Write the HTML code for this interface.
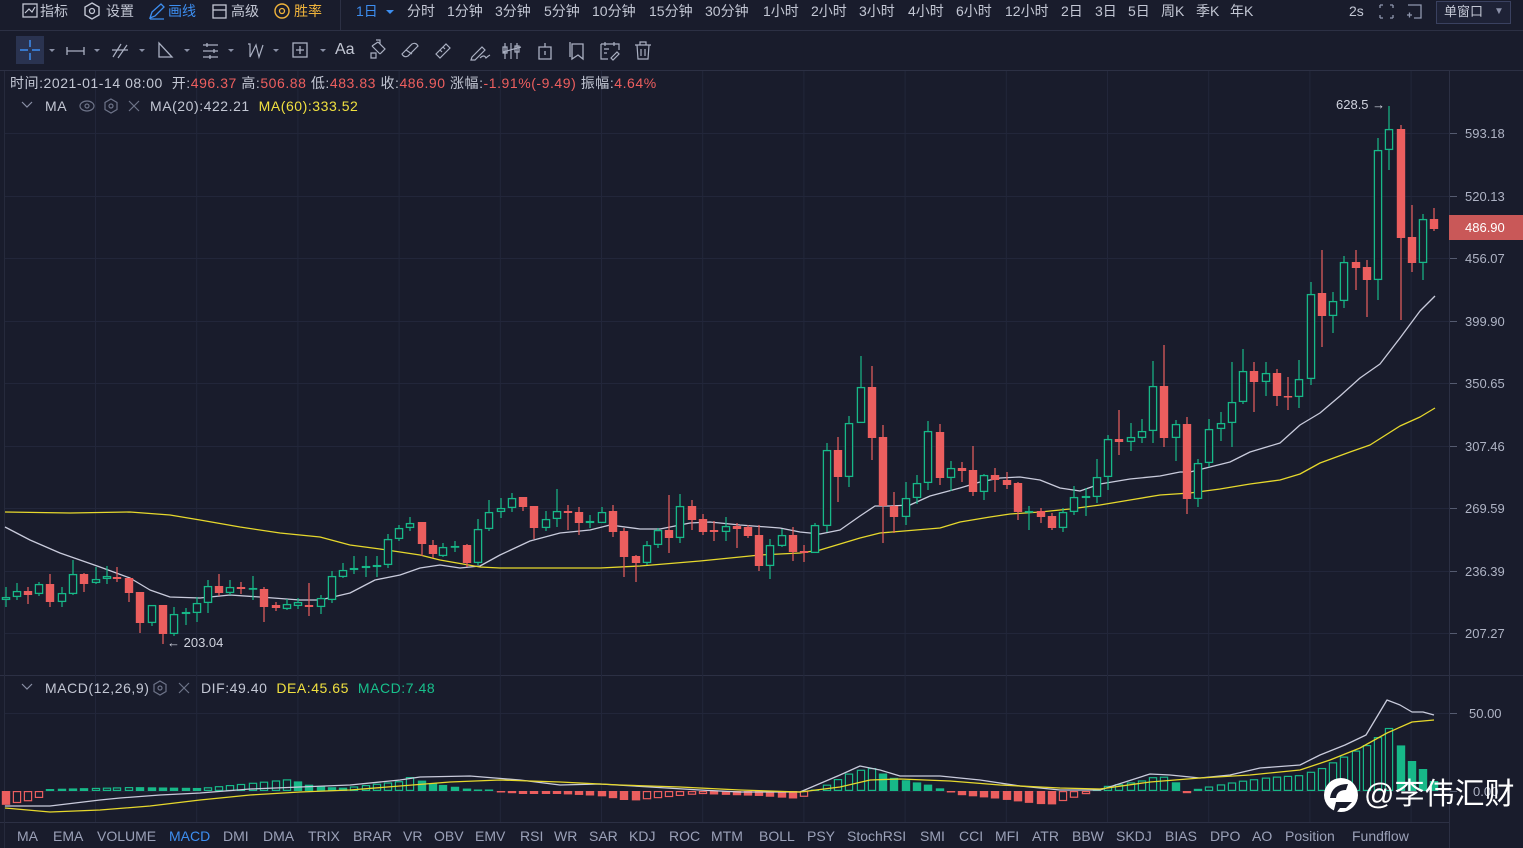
<!DOCTYPE html>
<html><head><meta charset="utf-8">
<style>
*{margin:0;padding:0;box-sizing:border-box}
body{width:1523px;height:848px;background:#191c2c;overflow:hidden;position:relative;font-family:"Liberation Sans","Noto Sans CJK SC",sans-serif;color:#c3c7d4}
.t{position:absolute;white-space:nowrap;font-size:14px;line-height:16px}
.ls{letter-spacing:0.55px}
.r{color:#ee5f5f}.y{color:#f0e040}.g{color:#18c08c}.b{color:#3d8ef0}
svg{position:absolute;left:0;top:0}
</style></head><body>
<div style="position:absolute;left:16px;top:36px;width:28px;height:28px;background:#2a3350"></div>
<svg id="s" width="1523" height="848"></svg>

<!-- top bar -->
<div class="t" style="left:40px;top:3px">指标</div>
<div class="t" style="left:106px;top:3px">设置</div>
<div class="t b" style="left:168px;top:3px">画线</div>
<div class="t" style="left:231px;top:3px">高级</div>
<div class="t" style="left:294px;top:3px;color:#f0b43c">胜率</div>
<div class="t b" style="left:356px;top:3px">1日</div>
<div class="t" style="left:407px;top:3px">分时</div>
<div class="t" style="left:447px;top:3px">1分钟</div>
<div class="t" style="left:495px;top:3px">3分钟</div>
<div class="t" style="left:544px;top:3px">5分钟</div>
<div class="t" style="left:592px;top:3px">10分钟</div>
<div class="t" style="left:649px;top:3px">15分钟</div>
<div class="t" style="left:705px;top:3px">30分钟</div>
<div class="t" style="left:763px;top:3px">1小时</div>
<div class="t" style="left:811px;top:3px">2小时</div>
<div class="t" style="left:859px;top:3px">3小时</div>
<div class="t" style="left:908px;top:3px">4小时</div>
<div class="t" style="left:956px;top:3px">6小时</div>
<div class="t" style="left:1005px;top:3px">12小时</div>
<div class="t" style="left:1061px;top:3px">2日</div>
<div class="t" style="left:1095px;top:3px">3日</div>
<div class="t" style="left:1128px;top:3px">5日</div>
<div class="t" style="left:1161px;top:3px">周K</div>
<div class="t" style="left:1196px;top:3px">季K</div>
<div class="t" style="left:1230px;top:3px">年K</div>
<div class="t" style="left:1349px;top:3px">2s</div>
<div style="position:absolute;left:1436px;top:1px;width:75px;height:23px;border:1px solid #3a4160;background:#1e2236"></div>
<div class="t" style="left:1444px;top:4px;font-size:13px">单窗口</div>
<div class="t" style="left:1494px;top:4px;font-size:10px;color:#8a90a8">▼</div>

<div class="t" style="left:335px;top:42px;font-size:16px">Aa</div>

<!-- info -->
<div class="t ls" style="left:10px;top:75px">时间:2021-01-14 08:00 &nbsp;开:<span class="r">496.37</span> 高:<span class="r">506.88</span> 低:<span class="r">483.83</span> 收:<span class="r">486.90</span> 涨幅:<span class="r">-1.91%(-9.49)</span> 振幅:<span class="r">4.64%</span></div>
<div class="t ls" style="left:45px;top:98px">MA</div>
<div class="t ls" style="left:150px;top:98px">MA(20):422.21 &nbsp;<span class="y">MA(60):333.52</span></div>
<div class="t ls" style="left:45px;top:680px">MACD(12,26,9)</div>
<div class="t ls" style="left:201px;top:680px">DIF:49.40 &nbsp;<span class="y">DEA:45.65</span> &nbsp;<span class="g">MACD:7.48</span></div>

<!-- price labels -->
<div class="t" style="left:1465px;top:126px;font-size:13px;color:#aeb3c4">593.18</div>
<div class="t" style="left:1465px;top:189px;font-size:13px;color:#aeb3c4">520.13</div>
<div style="position:absolute;left:1449px;top:215px;width:74px;height:25px;background:#c95858"></div>
<div class="t" style="left:1465px;top:220px;font-size:13px;color:#fff">486.90</div>
<div class="t" style="left:1465px;top:251px;font-size:13px;color:#aeb3c4">456.07</div>
<div class="t" style="left:1465px;top:314px;font-size:13px;color:#aeb3c4">399.90</div>
<div class="t" style="left:1465px;top:376px;font-size:13px;color:#aeb3c4">350.65</div>
<div class="t" style="left:1465px;top:439px;font-size:13px;color:#aeb3c4">307.46</div>
<div class="t" style="left:1465px;top:501px;font-size:13px;color:#aeb3c4">269.59</div>
<div class="t" style="left:1465px;top:564px;font-size:13px;color:#aeb3c4">236.39</div>
<div class="t" style="left:1465px;top:626px;font-size:13px;color:#aeb3c4">207.27</div>
<div class="t" style="left:1469px;top:706px;font-size:13px;color:#aeb3c4">50.00</div>
<div class="t" style="left:1473px;top:784px;font-size:13px;color:#aeb3c4">0.00</div>
<div class="t" style="left:1336px;top:97px;font-size:13px;color:#d0d3de">628.5 →</div>
<div class="t" style="left:167px;top:635px;font-size:13px;color:#d0d3de">← 203.04</div>

<!-- bottom tabs -->
<div class="t" style="left:17px;top:828px;color:#9ba1b8">MA</div>
<div class="t" style="left:53px;top:828px;color:#9ba1b8">EMA</div>
<div class="t" style="left:97px;top:828px;color:#9ba1b8">VOLUME</div>
<div class="t b" style="left:169px;top:828px">MACD</div>
<div class="t" style="left:223px;top:828px;color:#9ba1b8">DMI</div>
<div class="t" style="left:263px;top:828px;color:#9ba1b8">DMA</div>
<div class="t" style="left:308px;top:828px;color:#9ba1b8">TRIX</div>
<div class="t" style="left:353px;top:828px;color:#9ba1b8">BRAR</div>
<div class="t" style="left:403px;top:828px;color:#9ba1b8">VR</div>
<div class="t" style="left:434px;top:828px;color:#9ba1b8">OBV</div>
<div class="t" style="left:475px;top:828px;color:#9ba1b8">EMV</div>
<div class="t" style="left:520px;top:828px;color:#9ba1b8">RSI</div>
<div class="t" style="left:554px;top:828px;color:#9ba1b8">WR</div>
<div class="t" style="left:589px;top:828px;color:#9ba1b8">SAR</div>
<div class="t" style="left:629px;top:828px;color:#9ba1b8">KDJ</div>
<div class="t" style="left:669px;top:828px;color:#9ba1b8">ROC</div>
<div class="t" style="left:711px;top:828px;color:#9ba1b8">MTM</div>
<div class="t" style="left:759px;top:828px;color:#9ba1b8">BOLL</div>
<div class="t" style="left:807px;top:828px;color:#9ba1b8">PSY</div>
<div class="t" style="left:847px;top:828px;color:#9ba1b8">StochRSI</div>
<div class="t" style="left:920px;top:828px;color:#9ba1b8">SMI</div>
<div class="t" style="left:959px;top:828px;color:#9ba1b8">CCI</div>
<div class="t" style="left:995px;top:828px;color:#9ba1b8">MFI</div>
<div class="t" style="left:1032px;top:828px;color:#9ba1b8">ATR</div>
<div class="t" style="left:1072px;top:828px;color:#9ba1b8">BBW</div>
<div class="t" style="left:1116px;top:828px;color:#9ba1b8">SKDJ</div>
<div class="t" style="left:1165px;top:828px;color:#9ba1b8">BIAS</div>
<div class="t" style="left:1210px;top:828px;color:#9ba1b8">DPO</div>
<div class="t" style="left:1252px;top:828px;color:#9ba1b8">AO</div>
<div class="t" style="left:1285px;top:828px;color:#9ba1b8">Position</div>
<div class="t" style="left:1352px;top:828px;color:#9ba1b8">Fundflow</div>

<!-- watermark -->
<svg width="40" height="44" style="left:1322px;top:776px" viewBox="0 0 40 44"><circle cx="19" cy="19" r="17" fill="#fff"/><path d="M8 22 Q10 8 26 8 L24 14 Q15 14 14 22 Z M14 26 L30 26 L24 32 L18 32 L10 42 Z" fill="#191c2c"/></svg>
<div class="t" style="left:1364px;top:777px;font-size:30px;line-height:36px;color:#fff">@李伟汇财</div>

<script>
var NS="http://www.w3.org/2000/svg",S=document.getElementById('s');
function el(n,a){var e=document.createElementNS(NS,n);for(var k in a)e.setAttribute(k,a[k]);S.appendChild(e);return e}
el('rect',{x:0,y:30,width:1523,height:1,fill:'#2c3044'});
el('rect',{x:0,y:70,width:1523,height:1,fill:'#2c3044'});
el('rect',{x:340,y:0,width:1,height:30,fill:'#2c3044'});
el('rect',{x:0,y:675,width:1523,height:1,fill:'#2c3044'});
el('rect',{x:0,y:822,width:1450,height:1,fill:'#2c3044'});
el('rect',{x:1449,y:71,width:1,height:777,fill:'#2c3044'});
el('rect',{x:4,y:71,width:1,height:777,fill:'#262a3c'});
var hg=[133,196,258,321,383,446,508,571,633];
hg.forEach(function(y){el('rect',{x:5,y:y,width:1444,height:1,fill:'#22263a'});el('rect',{x:1450,y:y,width:7,height:1,fill:'#555b70'})});
[713,791].forEach(function(y){el('rect',{x:5,y:y,width:1444,height:1,fill:'#22263a'});el('rect',{x:1450,y:y,width:7,height:1,fill:'#555b70'})});
for(var i=0;i<14;i++){var x=95+i*101.2;el('rect',{x:x,y:71,width:1,height:751,fill:'#22263a'})}
el('rect',{x:1449,y:227,width:7,height:1.5,fill:'#fff'});
var ic='#c3c7d4';
el('rect',{x:23,y:4,width:14,height:13,fill:'none',stroke:ic,'stroke-width':1.3});
el('polyline',{points:'25,13 29,9 32,12 35,7',fill:'none',stroke:ic,'stroke-width':1.2});
el('path',{d:'M92 3 L99 7 L99 15 L92 19 L85 15 L85 7 Z',fill:'none',stroke:ic,'stroke-width':1.4});
el('circle',{cx:92,cy:11,r:2.5,fill:'none',stroke:ic,'stroke-width':1.3});
el('path',{d:'M150 18 L152 12 L161 4 L164 7 L155 16 Z M150 19 L164 19',fill:'none',stroke:'#3d8ef0','stroke-width':1.3});
el('rect',{x:213,y:5,width:13,height:13,fill:'none',stroke:ic,'stroke-width':1.3});
el('path',{d:'M213 10 L226 10',stroke:ic,'stroke-width':1.3});
el('circle',{cx:282,cy:11,r:7,fill:'none',stroke:'#f0b43c','stroke-width':1.4});
el('circle',{cx:282,cy:11,r:2.5,fill:'none',stroke:'#f0b43c','stroke-width':1.3});
el('path',{d:'M386 10 L394 10 L390 14 Z',fill:'#3d8ef0'});
el('path',{d:'M1380 5 l3 0 M1380 5 l0 3 M1393 5 l-3 0 M1393 5 l0 3 M1380 18 l3 0 M1380 18 l0 -3 M1393 18 l-3 0 M1393 18 l0 -3',stroke:'#9097ae','stroke-width':1.3});
el('path',{d:'M1408 5 L1421 5 L1421 18 L1414 18 M1407 15 l5 0 M1409.5 12.5 l0 5',fill:'none',stroke:'#9097ae','stroke-width':1.3});
var c2='#aab0c2';
el('path',{d:'M20 50 L28 50 M32 50 L40 50 M30 40 L30 47 M30 53 L30 60',stroke:'#3d8ef0','stroke-width':1.5});
[49,94,139,184,228,273,320].forEach(function(x){el('path',{d:'M'+x+' 49 l6 0 l-3 3 z',fill:'#8a90a6'})});
el('path',{d:'M67 51 L84 51 M67 47 L67 55 M84 47 L84 55',stroke:c2,'stroke-width':1.3});
el('path',{d:'M113 57 L121 44 M118 58 L127 45 M112 50 L128 50',stroke:c2,'stroke-width':1.2});
el('path',{d:'M159 43 L159 57 L172 57 Z',fill:'none',stroke:c2,'stroke-width':1.3});
el('path',{d:'M203 45 L218 45 M203 51 L218 51 M203 57 L218 57 M207 43 L207 47 M214 49 L214 53 M210 55 L210 59',stroke:c2,'stroke-width':1.3});
el('path',{d:'M248 44 L250 44 L250 57 L256 45 L259 57 L263 45',fill:'none',stroke:c2,'stroke-width':1.2});
el('rect',{x:293,y:43,width:14,height:14,fill:'none',stroke:c2,'stroke-width':1.3});
el('path',{d:'M300 46 L300 54 M296 50 L304 50',stroke:c2,'stroke-width':1.3});
el('path',{d:'M372 46 L380 54 M378 42 L385 49 L380 54 M372 46 L378 42 M371 53 l5 0 l0 5 l-5 0 z M376 40 l4 0 l0 4',fill:'none',stroke:c2,'stroke-width':1.2});
el('path',{d:'M402 54 L412 44 Q416 42 418 46 L408 56 Q404 58 402 54 Z M406 50 L412 54',fill:'none',stroke:c2,'stroke-width':1.2});
el('path',{d:'M436 54 L446 44 L450 48 L440 58 Z M440 50 l2 2 M443 47 l2 2',fill:'none',stroke:c2,'stroke-width':1.2});
el('path',{d:'M472 57 L482 47 L485 50 L475 60 L471 60 Z M480 58 Q484 54 486 58 Q488 56 490 55',fill:'none',stroke:c2,'stroke-width':1.2});
el('path',{d:'M505 43 L505 59 M511 43 L511 59 M517 43 L517 59 M503 52 L521 47 M503 47 l4 0 l0 6 l-4 0 z M515 46 l4 0 l0 6 l-4 0 z',fill:'none',stroke:c2,'stroke-width':1.2});
el('path',{d:'M539 47 L551 47 L551 59 L539 59 Z M545 43 L545 47 M545 51 L545 55',fill:'none',stroke:c2,'stroke-width':1.3});
el('path',{d:'M572 44 L583 44 L583 59 L578 55 L572 59 Z M570 42 L570 57',fill:'none',stroke:c2,'stroke-width':1.3});
el('path',{d:'M601 44 L619 44 L619 50 M601 44 L601 59 L608 59 M604 49 l5 0 M604 53 l3 0 M611 58 L617 52 L619 54 L613 60 Z M605 42 l0 4 M614 42 l0 4',fill:'none',stroke:c2,'stroke-width':1.2});
el('path',{d:'M635 45 L651 45 M640 45 L640 42 L646 42 L646 45 M637 45 L638 59 L648 59 L649 45 M641 49 l0 7 M645 49 l0 7',fill:'none',stroke:c2,'stroke-width':1.2});
el('path',{d:'M22 102 L27 107 L32 102',fill:'none',stroke:'#8a90a6','stroke-width':1.2});
el('path',{d:'M22 684 L27 689 L32 684',fill:'none',stroke:'#8a90a6','stroke-width':1.2});
el('ellipse',{cx:87,cy:106,rx:7,ry:5,fill:'none',stroke:'#6d7388','stroke-width':1.2});
el('circle',{cx:87,cy:106,r:2,fill:'none',stroke:'#6d7388','stroke-width':1.2});
[[111,106],[160,688]].forEach(function(p){el('path',{d:'M'+p[0]+' '+(p[1]-7)+' l6 3.5 l0 7 l-6 3.5 l-6 -3.5 l0 -7 z',fill:'none',stroke:'#6d7388','stroke-width':1.2});el('circle',{cx:p[0],cy:p[1],r:2,fill:'none',stroke:'#6d7388','stroke-width':1.2})});
[[134,106],[184,688]].forEach(function(p){el('path',{d:'M'+(p[0]-5)+' '+(p[1]-5)+' l10 10 M'+(p[0]+5)+' '+(p[1]-5)+' l-10 10',stroke:'#6d7388','stroke-width':1.2})});

function pl(pts,col,w){el('polyline',{points:pts.map(function(p){return p.join(',')}).join(' '),fill:'none',stroke:col,'stroke-width':w||1.3,'stroke-linejoin':'round'})}
pl([[5,527],[30,540],[60,553],[100,567],[130,578],[150,590],[170,597],[200,598],[230,595],[260,597],[300,600],[320,600],[350,593],[375,580],[400,575],[420,568],[440,565],[460,568],[480,566],[500,555],[530,541],[560,533],[590,530],[610,525],[640,529],[660,529],[690,523],[710,522],[740,525],[780,528],[800,532],[820,534],[840,530],[860,516],[875,506],[890,506],[910,505],[930,496],[960,488],[980,482],[1000,478],[1020,477],[1040,480],[1060,488],[1080,491],[1100,484],[1130,479],[1160,476],[1180,472],[1190,472],[1210,467],[1230,462],[1250,452],[1280,443],[1300,425],[1320,413],[1340,396],[1360,378],[1380,364],[1400,338],[1420,311],[1435,296]],'#c9cbdc');
pl([[5,512],[70,513],[130,512],[170,515],[200,520],[240,527],[280,533],[320,537],[350,545],[380,549],[420,555],[440,560],[480,567],[500,568],[600,568],[640,566],[700,561],[760,555],[800,553],[820,550],[860,538],[880,533],[940,528],[960,522],[990,517],[1010,514],[1040,512],[1070,509],[1100,505],[1130,500],[1160,495],[1190,493],[1220,489],[1250,484],[1280,480],[1300,474],[1320,463],[1350,452],[1370,445],[1400,426],[1420,417],[1435,408]],'#e6d82c');

var C=[[6,597,600,587,607,1],[17,591,597,583,600,1],[28,591,595,587,604,0],[39,584,594,582,596,1],[50,584,602,574,607,0],[62,593,602,587,607,1],[73,574,594,560,595,1],[84,574,584,573,592,0],[96,579,583,567,584,1],[107,576,579,566,584,1],[117,577,579,567,582,0],[129,578,593,578,602,0],[140,592,623,592,633,0],[152,605,623,605,626,1],[163,605,634,605,644,0],[174,614,634,607,636,1],[186,612,614,608,625,1],[197,603,613,597,622,1],[208,586,603,580,613,1],[219,586,593,574,596,0],[230,587,593,580,595,1],[241,587,589,582,594,0],[253,588,589,576,600,1],[264,589,607,587,622,0],[276,605,608,602,611,0],[287,604,609,599,610,1],[298,602,606,598,609,1],[309,605,607,583,616,0],[321,598,607,595,614,1],[332,576,600,571,603,1],[343,570,577,563,578,1],[354,568,570,556,574,1],[366,566,568,556,577,1],[377,565,567,556,577,1],[388,539,565,534,568,1],[399,528,539,525,541,1],[410,523,528,517,531,1],[422,522,544,522,556,0],[433,545,554,540,558,0],[443,547,556,543,557,1],[455,546,547,541,552,1],
[467,545,563,544,567,0],[478,529,563,519,565,1],[489,512,529,500,531,1],[501,508,512,498,518,1],[512,498,508,493,512,1],[523,497,507,497,511,0],[534,506,528,506,539,0],[546,519,528,511,531,1],[557,511,519,489,527,1],[568,511,513,505,530,0],[579,512,523,507,535,0],[590,521,523,515,528,1],[602,512,523,507,523,1],[613,511,532,505,537,0],[624,531,557,528,577,0],[636,556,563,555,582,0],[647,545,563,541,565,1],[658,530,545,528,548,1],[669,530,538,495,553,0],[680,506,538,494,543,1],[692,506,520,500,530,0],[703,519,532,514,535,0],[714,530,532,521,541,0],[726,526,532,517,541,1],[737,526,529,523,548,0],[748,527,536,525,538,0],[759,535,566,525,571,0],[770,545,566,539,579,1],[782,535,546,529,547,1],[793,535,552,527,561,0],[804,551,553,545,562,0],[815,525,553,523,553,1],[827,450,526,443,532,1],[838,450,477,437,502,0],[849,423,477,416,487,1],[861,387,423,356,423,1],[872,387,438,366,460,0],[883,437,506,425,543,0],[894,506,517,492,533,0],[906,498,517,482,525,1],[917,483,498,475,504,1],[928,431,483,421,490,1],
[940,432,478,424,485,0],[951,468,478,461,491,1],[962,468,471,462,482,0],[973,470,492,446,496,0],[984,475,492,474,500,1],[995,475,480,468,492,0],[1007,480,485,472,489,0],[1018,483,512,482,520,0],[1029,511,512,506,530,1],[1041,511,517,508,523,0],[1052,516,528,513,530,0],[1063,512,528,508,532,1],[1074,497,512,486,515,1],[1086,496,498,488,516,1],[1097,477,497,459,503,1],[1108,439,477,435,490,1],[1119,439,442,410,455,0],[1131,437,442,423,451,1],[1142,431,438,419,443,1],[1153,386,431,361,443,1],[1164,386,438,345,447,0],[1176,424,438,420,461,1],[1187,424,499,417,514,0],[1198,463,499,459,507,1],[1209,429,463,419,467,1],[1221,423,429,412,441,1],[1232,402,423,362,447,1],[1243,371,402,349,404,1],[1254,371,382,362,412,0],[1266,373,382,362,396,1],[1277,373,396,369,406,0],[1288,396,397,377,410,0],[1299,379,397,360,408,1],[1311,294,379,282,385,1],[1322,293,316,250,347,0],[1333,301,316,292,333,1],[1344,262,301,256,308,1],[1356,262,268,250,290,0],[1367,267,280,260,317,0],[1378,150,280,138,300,1],[1389,129,150,106,170,1],[1401,129,238,125,320,0],[1412,237,263,205,272,0],[1423,219,263,214,280,1],[1434,219,229,208,231,0]];
var G='#17b888',R='#eb5e5e';
C.forEach(function(c){var col=c[5]?G:R;var x=c[0];
el('rect',{x:x-0.6,y:c[3],width:1.2,height:c[4]-c[3],fill:col});
var h=Math.max(c[2]-c[1],1.5);
if(c[5]){el('rect',{x:x-3.6,y:c[1]+0.6,width:7.2,height:Math.max(h-1.2,0.5),fill:'#191c2c',stroke:col,'stroke-width':1.3})}
else el('rect',{x:x-4.2,y:c[1],width:8.4,height:h,fill:col});});

var HP=[[5,-14],[30,-10],[45,-5],[50,2],[130,4],[200,3],[250,8],[290,12],[310,6],[340,3],[400,10],[410,14],[430,8],[470,2],[520,-3],[560,-3],[600,-5],[630,-10],[660,-7],[700,-3],[760,-5],[800,-8],[815,0],[830,8],[850,18],[870,24],[890,14],[930,6],[960,-4],[1000,-8],[1030,-12],[1050,-14],[1070,-8],[1090,-2],[1100,4],[1140,10],[1160,16],[1175,10],[1185,-3],[1200,3],[1240,10],[1270,14],[1300,16],[1320,22],[1345,35],[1375,50],[1387,66],[1400,47],[1412,30],[1423,22],[1434,10]];
function hv(x){for(var i=1;i<HP.length;i++){if(x<=HP[i][0]){var a=HP[i-1],b=HP[i];return a[1]+(b[1]-a[1])*(x-a[0])/(b[0]-a[0])}}return 10}
var base=791,prev=null;
C.forEach(function(c){var x=c[0],v=hv(x);var col=v>=0?G:R;var hollow=prev!==null&&v>prev;prev=v;
var h=Math.max(Math.abs(v),1.5),y=v>=0?base-h:base;
if(hollow&&h>3)el('rect',{x:x-3.6,y:y+0.6,width:7.2,height:h-1.2,fill:'none',stroke:col,'stroke-width':1.2});
else el('rect',{x:x-4.2,y:y,width:8.4,height:h,fill:col});});
pl([[5,806],[50,806],[100,800],[120,798],[160,795],[200,793],[250,789],[300,787],[350,785],[400,780],[420,777],[470,776],[520,780],[560,785],[600,784],[650,787],[700,790],[740,792],[800,792],[840,775],[860,766],[880,770],[900,776],[940,776],[980,780],[1020,786],[1060,790],[1100,790],[1150,774],[1170,775],[1200,778],[1230,775],[1260,768],[1300,765],[1320,755],[1345,745],[1366,735],[1387,700],[1400,705],[1412,712],[1423,712],[1434,715]],'#c9cbdc');
pl([[5,808],[50,812],[100,810],[150,806],[200,800],[250,795],[300,792],[350,790],[400,786],[450,782],[500,780],[560,782],[620,785],[680,787],[740,790],[800,792],[840,787],[870,780],[900,779],[950,781],[1000,785],[1060,788],[1100,789],[1150,782],[1200,778],[1250,775],[1300,770],[1330,760],[1360,748],[1387,733],[1412,722],[1434,720]],'#e6d82c');
</script>
</body></html>
